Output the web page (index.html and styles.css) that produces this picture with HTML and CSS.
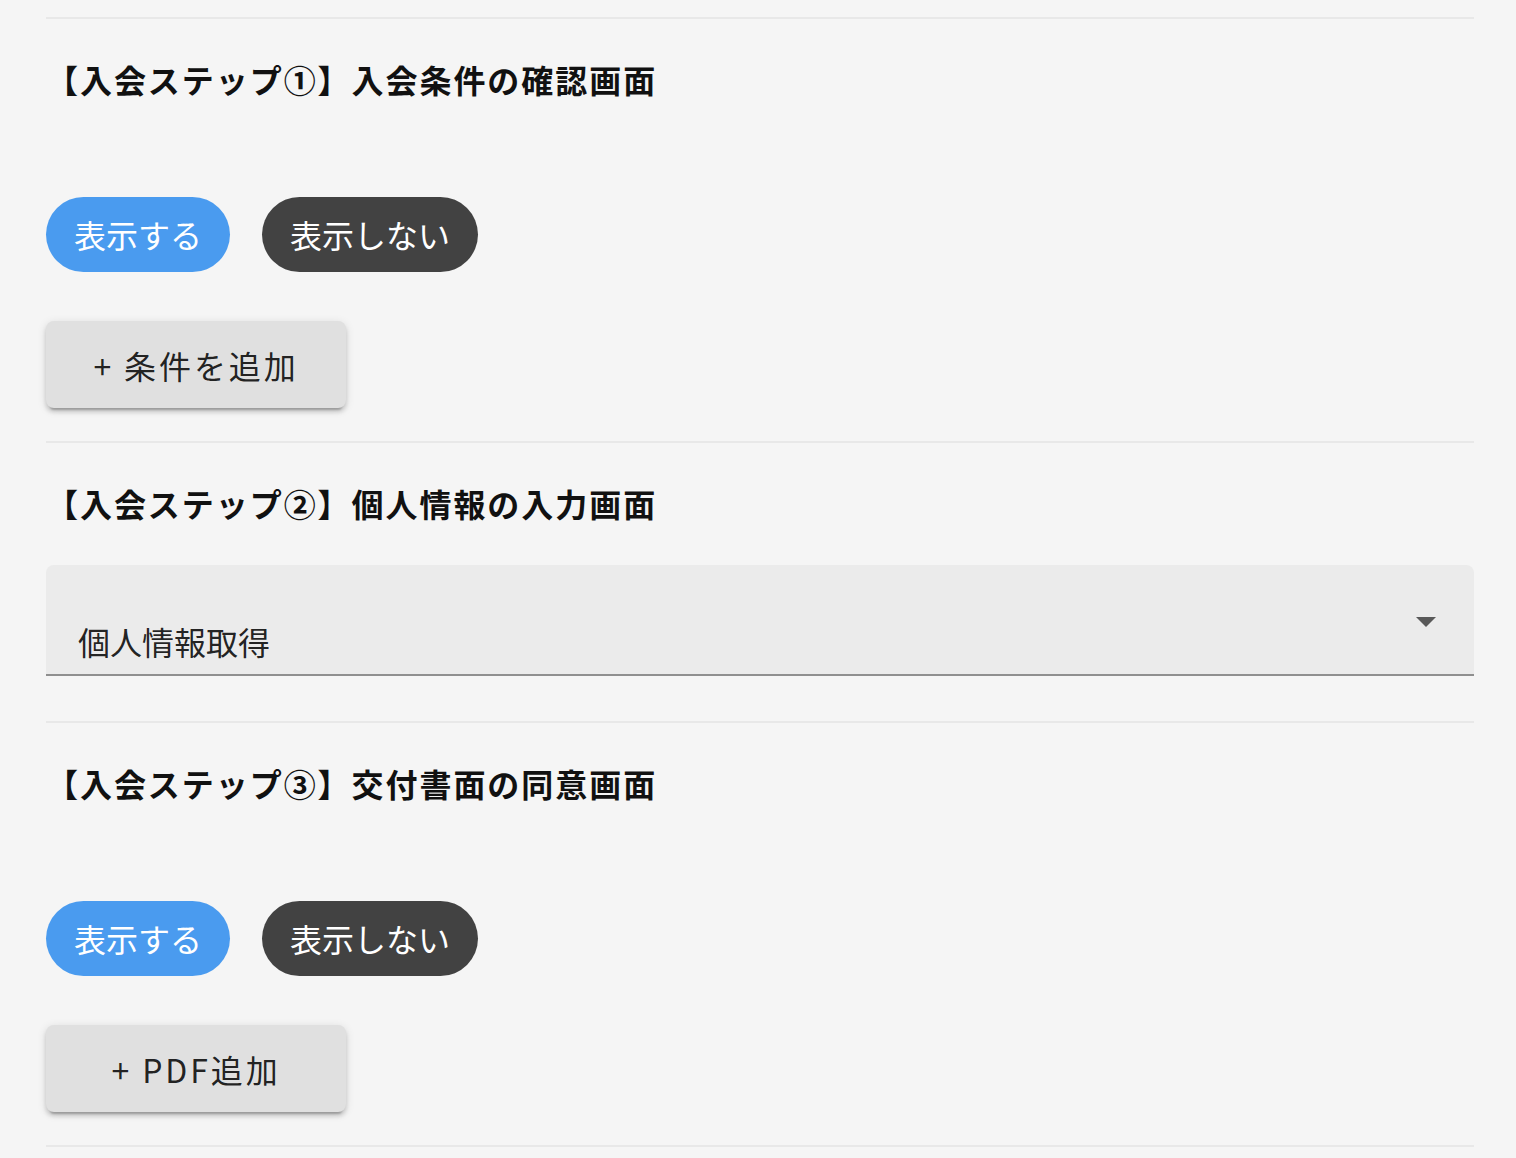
FILE: index.html
```html
<!DOCTYPE html>
<html lang="ja">
<head>
<meta charset="utf-8">
<title>入会ステップ設定</title>
<link rel="stylesheet" href="styles.css">
</head>
<body>
<main class="page">
  <section class="section">
    <h2 class="section-title">【入会ステップ①】入会条件の確認画面</h2>
    <div class="spacer"></div>
    <div class="toggle-row">
      <button class="pill pill-on">表示する</button>
      <button class="pill pill-off">表示しない</button>
    </div>
    <button class="add-btn">+ 条件を追加</button>
  </section>
  <section class="section">
    <h2 class="section-title">【入会ステップ②】個人情報の入力画面</h2>
    <div class="select">
      <span class="select-value">個人情報取得</span>
      <svg class="select-icon" viewBox="0 0 24 24" width="48" height="48"><path d="M7 10l5 5 5-5z" fill="#595959"/></svg>
    </div>
  </section>
  <section class="section">
    <h2 class="section-title">【入会ステップ③】交付書面の同意画面</h2>
    <div class="spacer"></div>
    <div class="toggle-row">
      <button class="pill pill-on">表示する</button>
      <button class="pill pill-off">表示しない</button>
    </div>
    <button class="add-btn">+ PDF追加</button>
  </section>
  <div class="end-divider"></div>
</main>
</body>
</html>
```

FILE: styles.css
```css
html, body {
  margin: 0;
  padding: 0;
  background: #f5f5f5;
}
body {
  font-family: "Noto Sans CJK JP", "Noto Sans", sans-serif;
  color: rgba(0, 0, 0, 0.87);
}
.page {
  margin: 0 42px 0 46px;
  padding-top: 17px;
}
.section {
  border-top: 2px solid #e8e8e8;
  padding: 36px 0 33px;
  display: flex;
  flex-direction: column;
  align-items: flex-start;
}
.section-title {
  margin: 0 0 38px;
  font-size: 32px;
  line-height: 48px;
  font-weight: 700;
  letter-spacing: 1.95px;
  color: #111;
}
.spacer {
  height: 56px;
}
.toggle-row {
  display: flex;
  gap: 32px;
  margin-bottom: 49px;
}
.pill {
  height: 75px;
  padding: 0 28px;
  border: none;
  border-radius: 38px;
  font-family: inherit;
  font-size: 32px;
  line-height: 75px;
  color: #fff;
  cursor: pointer;
}
.pill-on {
  background: #4a9bef;
}
.pill-off {
  background: #424242;
}
.add-btn {
  width: 300px;
  height: 87px;
  border: none;
  border-radius: 8px;
  background: #e0e0e0;
  font-family: inherit;
  font-size: 32px;
  letter-spacing: 2.9px;
  color: rgba(0, 0, 0, 0.87);
  box-shadow: 0 6px 2px -4px rgba(0, 0, 0, 0.2), 0 4px 4px 0 rgba(0, 0, 0, 0.14), 0 2px 10px 0 rgba(0, 0, 0, 0.12);
  cursor: pointer;
}
.select {
  position: relative;
  align-self: stretch;
  box-sizing: border-box;
  height: 111px;
  padding: 52px 32px 9px;
  background: #ebebeb;
  border-radius: 8px 8px 0 0;
  border-bottom: 2px solid #8f8f8f;
  margin-bottom: 12px;
}
.select-value {
  display: block;
  font-size: 32px;
  line-height: 48px;
  color: rgba(0, 0, 0, 0.87);
}
.select-icon {
  position: absolute;
  right: 24px;
  top: 32px;
}
.end-divider {
  border-top: 2px solid #e8e8e8;
}
```
